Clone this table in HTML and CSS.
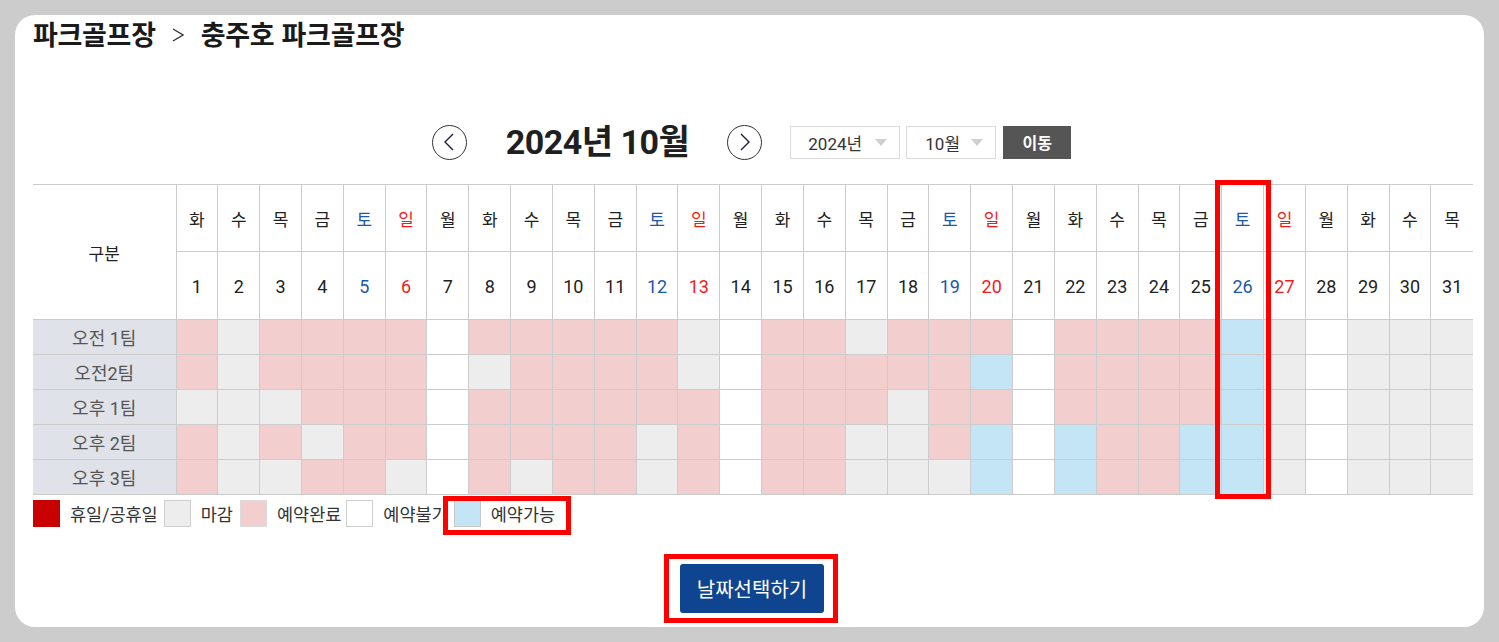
FILE: index.html
```html
<!DOCTYPE html>
<html lang="ko">
<head>
<meta charset="utf-8">
<title>충주호 파크골프장</title>
<link rel="stylesheet" href="styles.css">
</head>
<body>
<div class="card">
  <h1 class="crumb">
    <span>파크골프장</span>
    <svg class="crumb-sep" width="12" height="14" viewBox="0 0 12 14"><polyline points="1,1 11,7 1,13" fill="none" stroke="#333" stroke-width="1.3"/></svg>
    <span>충주호 파크골프장</span>
  </h1>

  <div class="month-nav">
    <button class="circle-btn" aria-label="이전달"><svg width="12" height="20" viewBox="0 0 12 20"><polyline points="10,2 2,10 10,18" fill="none" stroke="#1b1f3b" stroke-width="1.4"/></svg></button>
    <div class="month-title">2024년 10월</div>
    <button class="circle-btn" aria-label="다음달"><svg width="12" height="20" viewBox="0 0 12 20"><polyline points="2,2 10,10 2,18" fill="none" stroke="#1b1f3b" stroke-width="1.4"/></svg></button>
    <div class="sel sel-year"><span>2024년</span><i class="caret"></i></div>
    <div class="sel sel-month"><span>10월</span><i class="caret"></i></div>
    <button class="go-btn">이동</button>
  </div>

  <div class="cal-wrap">
    <table class="cal">
      <colgroup><col class="c-label"></colgroup>
      <thead>
        <tr class="r-day">
          <th rowspan="2" class="h-label">구분</th>
          <th>화</th><th>수</th><th>목</th><th>금</th><th class="sat">토</th><th class="sun">일</th><th>월</th>
          <th>화</th><th>수</th><th>목</th><th>금</th><th class="sat">토</th><th class="sun">일</th><th>월</th>
          <th>화</th><th>수</th><th>목</th><th>금</th><th class="sat">토</th><th class="sun">일</th><th>월</th>
          <th>화</th><th>수</th><th>목</th><th>금</th><th class="sat">토</th><th class="sun">일</th><th>월</th>
          <th>화</th><th>수</th><th>목</th>
        </tr>
        <tr class="r-date">
          <th>1</th><th>2</th><th>3</th><th>4</th><th class="sat">5</th><th class="sun">6</th><th>7</th>
          <th>8</th><th>9</th><th>10</th><th>11</th><th class="sat">12</th><th class="sun">13</th><th>14</th>
          <th>15</th><th>16</th><th>17</th><th>18</th><th class="sat">19</th><th class="sun">20</th><th>21</th>
          <th>22</th><th>23</th><th>24</th><th>25</th><th class="sat">26</th><th class="sun">27</th><th>28</th>
          <th>29</th><th>30</th><th>31</th>
        </tr>
      </thead>
      <tbody>
        <tr>
          <td class="lbl">오전 1팀</td>
          <td class="p"></td><td class="g"></td><td class="p"></td><td class="p"></td><td class="p"></td><td class="p"></td><td class="w"></td>
          <td class="p"></td><td class="p"></td><td class="p"></td><td class="p"></td><td class="p"></td><td class="g"></td><td class="w"></td>
          <td class="p"></td><td class="p"></td><td class="g"></td><td class="p"></td><td class="p"></td><td class="p"></td><td class="w"></td>
          <td class="p"></td><td class="p"></td><td class="p"></td><td class="p"></td><td class="b"></td><td class="g"></td><td class="w"></td>
          <td class="g"></td><td class="g"></td><td class="g"></td>
        </tr>
        <tr>
          <td class="lbl">오전2팀</td>
          <td class="p"></td><td class="g"></td><td class="p"></td><td class="p"></td><td class="p"></td><td class="p"></td><td class="w"></td>
          <td class="g"></td><td class="p"></td><td class="p"></td><td class="p"></td><td class="p"></td><td class="g"></td><td class="w"></td>
          <td class="p"></td><td class="p"></td><td class="p"></td><td class="p"></td><td class="p"></td><td class="b"></td><td class="w"></td>
          <td class="p"></td><td class="p"></td><td class="p"></td><td class="p"></td><td class="b"></td><td class="g"></td><td class="w"></td>
          <td class="g"></td><td class="g"></td><td class="g"></td>
        </tr>
        <tr>
          <td class="lbl">오후 1팀</td>
          <td class="g"></td><td class="g"></td><td class="g"></td><td class="p"></td><td class="p"></td><td class="p"></td><td class="w"></td>
          <td class="p"></td><td class="p"></td><td class="p"></td><td class="p"></td><td class="p"></td><td class="p"></td><td class="w"></td>
          <td class="p"></td><td class="p"></td><td class="p"></td><td class="g"></td><td class="p"></td><td class="p"></td><td class="w"></td>
          <td class="p"></td><td class="p"></td><td class="p"></td><td class="p"></td><td class="b"></td><td class="g"></td><td class="w"></td>
          <td class="g"></td><td class="g"></td><td class="g"></td>
        </tr>
        <tr>
          <td class="lbl">오후 2팀</td>
          <td class="p"></td><td class="g"></td><td class="p"></td><td class="g"></td><td class="p"></td><td class="p"></td><td class="w"></td>
          <td class="p"></td><td class="p"></td><td class="p"></td><td class="p"></td><td class="g"></td><td class="p"></td><td class="w"></td>
          <td class="p"></td><td class="p"></td><td class="g"></td><td class="g"></td><td class="p"></td><td class="b"></td><td class="w"></td>
          <td class="b"></td><td class="p"></td><td class="p"></td><td class="b"></td><td class="b"></td><td class="g"></td><td class="w"></td>
          <td class="g"></td><td class="g"></td><td class="g"></td>
        </tr>
        <tr>
          <td class="lbl">오후 3팀</td>
          <td class="p"></td><td class="g"></td><td class="g"></td><td class="p"></td><td class="p"></td><td class="g"></td><td class="w"></td>
          <td class="p"></td><td class="g"></td><td class="p"></td><td class="p"></td><td class="g"></td><td class="p"></td><td class="w"></td>
          <td class="p"></td><td class="p"></td><td class="g"></td><td class="g"></td><td class="g"></td><td class="b"></td><td class="w"></td>
          <td class="b"></td><td class="p"></td><td class="p"></td><td class="b"></td><td class="b"></td><td class="g"></td><td class="w"></td>
          <td class="g"></td><td class="g"></td><td class="g"></td>
        </tr>
      </tbody>
    </table>
    <div class="col-mark"></div>
  </div>

  <div class="legend">
    <div class="lg-item"><i class="sw sw-red"></i><span>휴일/공휴일</span></div>
    <div class="lg-item"><i class="sw sw-gray"></i><span>마감</span></div>
    <div class="lg-item"><i class="sw sw-pink"></i><span>예약완료</span></div>
    <div class="lg-item"><i class="sw sw-white"></i><span>예약불가</span></div>
    <div class="lg-item lg-mark"><i class="sw sw-blue"></i><span>예약가능</span></div>
  </div>

  <div class="action">
    <button class="pick-btn">날짜선택하기</button>
  </div>
</div>
</body>
</html>
```

FILE: styles.css
```css
html, body {
  margin: 0;
  padding: 0;
}
body {
  background: #cccccc;
  padding: 15px;
  font-family: "Roboto", "Noto Sans CJK KR", sans-serif;
  color: #222;
}
.card {
  background: #fff;
  border-radius: 20px;
  width: 1469px;
  height: 612px;
  box-sizing: border-box;
  padding: 4px 11px 0 18px;
}
.crumb {
  margin: 0;
  height: 30px;
  display: flex;
  align-items: center;
  font-family: "Noto Sans CJK KR", sans-serif;
  font-size: 27px;
  font-weight: 700;
  line-height: 30px;
  color: #1a1a1a;
  letter-spacing: -0.3px;
}
.crumb-sep {
  margin: 2px 17px 0 16px;
}
.month-nav {
  margin-top: 75px;
  height: 36px;
  display: flex;
  align-items: center;
  justify-content: center;
  padding-right: 3px;
}
.circle-btn {
  width: 35px;
  height: 35px;
  border: 1px solid #333;
  border-radius: 50%;
  background: #fff;
  padding: 0;
  display: flex;
  align-items: center;
  justify-content: center;
}
.month-title {
  font-family: "Roboto", "Noto Sans CJK KR", sans-serif;
  font-weight: 700;
  font-size: 34px;
  letter-spacing: -0.5px;
  color: #1f1f1f;
  margin: 0 38px 0 39px;
  line-height: 36px;
}
.sel {
  height: 33px;
  box-sizing: border-box;
  border: 1px solid #dcdcdc;
  display: flex;
  align-items: center;
  justify-content: space-between;
  font-size: 17px;
  color: #333;
  background: #fff;
}
.sel-year {
  width: 110px;
  margin-left: 28px;
  padding: 0 12px 0 17px;
}
.sel-month {
  width: 90px;
  margin-left: 6px;
  padding: 0 12px 0 18px;
}
.caret {
  width: 0;
  height: 0;
  border-left: 6px solid transparent;
  border-right: 6px solid transparent;
  border-top: 7px solid #cfcfcf;
}
.go-btn {
  margin-left: 7px;
  width: 68px;
  height: 33px;
  border: 0;
  background: #555555;
  color: #fff;
  font-family: "Noto Sans CJK KR", sans-serif;
  font-weight: 700;
  font-size: 16px;
  padding: 0;
}
.cal-wrap {
  position: relative;
  margin-top: 24px;
}
.cal {
  width: 1440px;
  table-layout: fixed;
  border-collapse: collapse;
  border-top: 1px solid #cccccc;
  border-bottom: 1px solid #dddddd;
}
.c-label {
  width: 143px;
}
.cal th, .cal td {
  border: 1px solid #cccccc;
  padding: 0;
  text-align: center;
}
.cal tr > :first-child {
  border-left: 0;
}
.cal tr > :last-child {
  border-right: 0;
}
.cal th {
  font-weight: 400;
  color: #222;
}
.r-day {
  height: 67px;
}
.r-day th {
  font-size: 17px;
}
.r-date {
  height: 68px;
}
.r-date th {
  font-size: 18px;
  padding-top: 2px;
}
.h-label {
  font-size: 17px;
}
.cal th.sat { color: #1a5aa6; }
.cal th.sun { color: #f21b1b; }
.cal tbody tr {
  height: 35px;
}
.cal td.lbl {
  background: #dfe2e8;
  color: #555;
  font-size: 18px;
}
.cal td.p { background: #f3cece; }
.cal td.g { background: #ededed; }
.cal td.w { background: #ffffff; }
.cal td.b { background: #c3e5f5; }
.col-mark {
  position: absolute;
  left: 1182px;
  top: -4px;
  width: 56px;
  height: 319px;
  box-sizing: border-box;
  border: 5px solid #ff0000;
}
.legend {
  margin-top: 5px;
  display: flex;
  align-items: center;
  height: 27px;
}
.lg-item {
  display: flex;
  align-items: center;
  position: relative;
  font-size: 17.5px;
  color: #333;
}
.sw {
  width: 27px;
  height: 27px;
  box-sizing: border-box;
  margin-right: 10px;
}
.sw-red { background: #c80000; }
.sw-gray { background: #ededed; border: 1px solid #cfcfcf; margin-left: 6px; }
.sw-pink { background: #f3cece; border: 1px solid #dcdcdc; margin-left: 7px; }
.sw-white { background: #fff; border: 1px solid #cfcfcf; margin-left: 5px; }
.sw-blue { background: #c3e5f5; border: 1px solid #c8c8c8; margin-left: 6px; }
.lg-mark::after {
  content: "";
  position: absolute;
  left: -5px;
  right: -16px;
  top: -4px;
  bottom: -8px;
  border: 5px solid #ff0000;
}
.action {
  margin-top: 37px;
  display: flex;
  justify-content: center;
  padding-right: 2px;
}
.pick-btn {
  position: relative;
  width: 144px;
  height: 49px;
  border: 0;
  border-radius: 3px;
  background: #0f4590;
  color: #fff;
  font-family: "Noto Sans CJK KR", sans-serif;
  font-size: 20px;
  padding: 0;
}
.pick-btn::after {
  content: "";
  position: absolute;
  left: -16px;
  right: -14px;
  top: -10px;
  bottom: -10px;
  border: 5px solid #ff0000;
}
```
